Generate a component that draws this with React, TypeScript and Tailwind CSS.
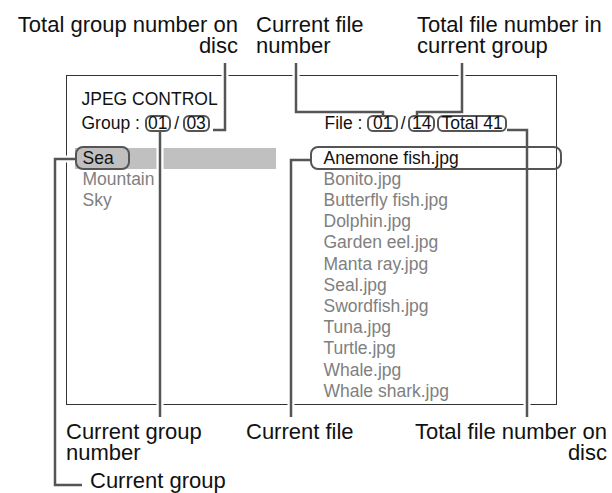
const groups = ["Sea", "Mountain", "Sky"];

const files = [
  "Anemone fish.jpg",
  "Bonito.jpg",
  "Butterfly fish.jpg",
  "Dolphin.jpg",
  "Garden eel.jpg",
  "Manta ray.jpg",
  "Seal.jpg",
  "Swordfish.jpg",
  "Tuna.jpg",
  "Turtle.jpg",
  "Whale.jpg",
  "Whale shark.jpg",
];

// callout leader lines, drawn over a white halo so they cut through borders
const leaders = [
  "M225 63 V130 H213",
  "M296 63 V112 H383 V117",
  "M462 63 V112 H417 V117",
  "M507 130 H527 V417",
  "M312 160 H291 V417",
  "M160 132 V417",
  "M76 159 H55 V485 H82",
];

function Num({ children, className }: { children: React.ReactNode; className: string }) {
  return (
    <span
      className={`relative z-20 inline-flex h-[17px] items-center justify-center rounded-[6px] border-2 border-[#555] bg-white leading-[13px] ${className}`}
    >
      {children}
    </span>
  );
}

export default function App() {
  return (
    <div className="relative h-[493px] w-[612px] overflow-hidden bg-white font-['Liberation_Sans',Arial,sans-serif] text-[#111]">
      {/* annotations */}
      <div className="absolute right-[374px] top-[15px] text-right text-[22px] leading-[20.5px]">
        Total group number on
        <br />
        disc
      </div>
      <div className="absolute left-[256px] top-[15px] text-[22px] leading-[20.5px]">
        Current file
        <br />
        number
      </div>
      <div className="absolute left-[417px] top-[15px] text-[22px] leading-[20.5px]">
        Total file number in
        <br />
        current group
      </div>
      <div className="absolute left-[66px] top-[422px] text-[22px] leading-[20.5px]">
        Current group
        <br />
        number
      </div>
      <div className="absolute left-[246px] top-[422px] text-[22px] leading-[20.5px]">Current file</div>
      <div className="absolute right-[5px] top-[422px] text-right text-[22px] leading-[20.5px]">
        Total file number on
        <br />
        disc
      </div>
      <div className="absolute left-[90px] top-[471px] text-[22px] leading-[20.5px]">Current group</div>

      {/* screen */}
      <div className="absolute left-[66px] top-[75px] h-[330px] w-[491px] border-[1.5px] border-[#333] pl-[7.5px] pt-[12.5px] text-[17.5px] leading-[21px]">
        <div className="pl-[7px]">JPEG CONTROL</div>

        <div className="mt-[3px] grid h-[21px] grid-cols-[201px_252px] gap-x-[34px]">
          <div className="flex items-center pl-[7px]">
            <span className="whitespace-pre">Group : </span>
            <Num className="w-[26px]">01</Num>
            <span className="mx-[3.5px]">/</span>
            <Num className="w-[27px]">03</Num>
          </div>
          <div className="flex items-center pl-[15px]">
            <span className="whitespace-pre">File : </span>
            <Num className="w-[31px]">01</Num>
            <span className="mx-[2.5px]">/</span>
            <Num className="w-[27px]">14</Num>
            <Num className="ml-[2px] w-[70px]">Total 41</Num>
          </div>
        </div>

        <div className="mt-[14px] grid grid-cols-[201px_252px] items-start gap-x-[34px] leading-[21.2px]">
          <div>
            {groups.map((g, i) =>
              i === 0 ? (
                <div key={g} className="flex h-[21.2px] items-center bg-[#c0c0c0]">
                  <span className="relative z-20 flex h-[24px] w-[55px] items-center rounded-[8px] border-2 border-[#555] bg-[#c0c0c0] pl-[6px]">
                    {g}
                  </span>
                </div>
              ) : (
                <div key={g} className="pl-[8px] text-[#808080]">
                  {g}
                </div>
              )
            )}
          </div>
          <div>
            {files.map((f, i) =>
              i === 0 ? (
                <div key={f} className="flex h-[21.2px] items-center">
                  <span className="relative z-20 flex h-[24px] w-full items-center rounded-[8px] border-2 border-[#555] pl-[12px]">
                    {f}
                  </span>
                </div>
              ) : (
                <div key={f} className="pl-[14px] text-[#808080]">
                  {f}
                </div>
              )
            )}
          </div>
        </div>
      </div>

      <svg className="pointer-events-none absolute inset-0 z-10" width="612" height="493" fill="none">
        {leaders.map((d) => (
          <path key={"h" + d} d={d} stroke="#fff" strokeWidth="7" />
        ))}
        {leaders.map((d) => (
          <path key={d} d={d} stroke="#555" strokeWidth="2.5" />
        ))}
      </svg>
    </div>
  );
}
